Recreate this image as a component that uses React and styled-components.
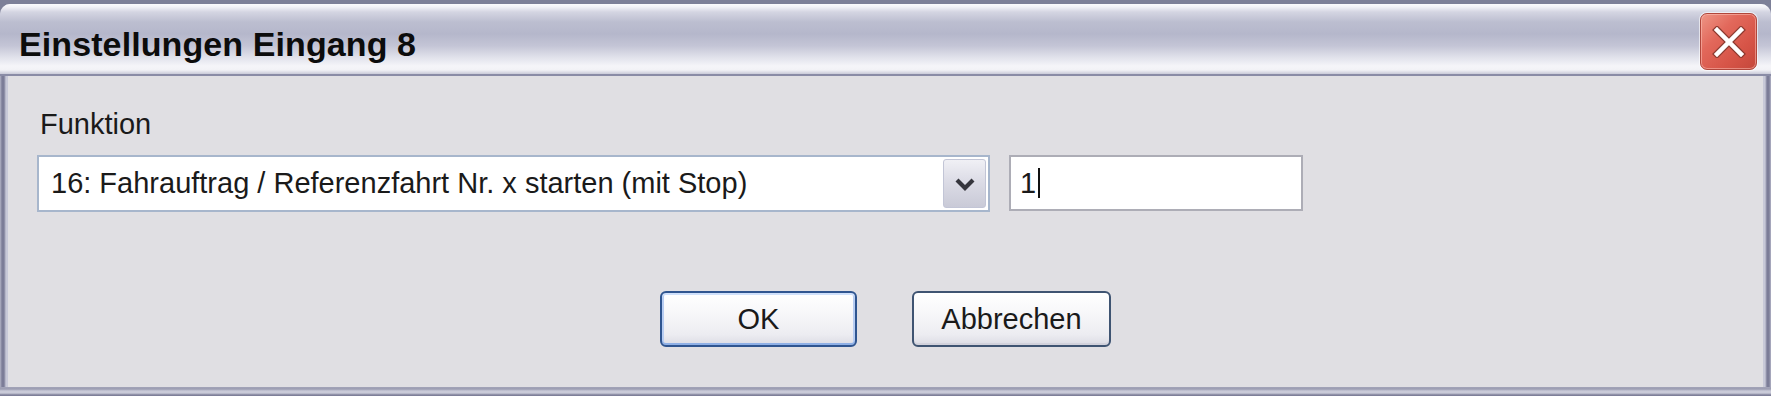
import React from "react";
import styled, { createGlobalStyle } from "styled-components";

const Global = createGlobalStyle`
  html, body { margin: 0; padding: 0; }
  body {
    background: #7d8098;
    font-family: "Liberation Sans", Arial, sans-serif;
    overflow: hidden;
  }
`;

const Window = styled.div`
  width: 1771px;
  height: 396px;
  box-sizing: border-box;
  padding-top: 4px;
  display: flex;
  flex-direction: column;
`;

const Frame = styled.div`
  flex: 1;
  display: flex;
  flex-direction: column;
  border-radius: 10px 10px 0 0;
  overflow: hidden;
  background: linear-gradient(
    to right,
    #b3b4c6 0px,
    #7c7d98 2px,
    #7c7d98 4px,
    #c8c9d8 6px,
    #c8c9d8 calc(100% - 6px),
    #7c7d98 calc(100% - 4px),
    #7c7d98 calc(100% - 2px),
    #b3b4c6 100%
  );
`;

const TitleBar = styled.div`
  height: 72px;
  flex: none;
  display: flex;
  align-items: flex-start;
  justify-content: space-between;
  padding: 0 14px 0 19px;
  box-sizing: border-box;
  border-bottom: 2px solid #8a8ca6;
  background: linear-gradient(
    to bottom,
    #fbfbfd 0px,
    #f2f2f7 3px,
    #d4d5e2 8px,
    #bcbed0 18px,
    #b5b7cb 30px,
    #c4c5d6 42px,
    #e2e3ec 54px,
    #f5f5f9 62px,
    #f2f2f6 66px,
    #c9cad8 70px,
    #b8b9cb 72px
  );
`;

const Title = styled.span`
  margin-top: 23px;
  font-family: "Liberation Sans", Arial, sans-serif;
  font-weight: bold;
  font-size: 34px;
  line-height: 34px;
  color: #0c0c0c;
  letter-spacing: 0.1px;
`;

const CloseButton = styled.div`
  margin-top: 9px;
  width: 57px;
  height: 57px;
  box-sizing: border-box;
  border-radius: 7px;
  border: 1px solid #b0463b;
  background: linear-gradient(135deg, #ee9686 0%, #e2685b 35%, #d65447 70%, #c4473b 100%);
  box-shadow: inset 0 0 0 1px rgba(255, 200, 190, 0.5), 0 0 0 1px rgba(255, 255, 255, 0.6);
  display: flex;
  align-items: center;
  justify-content: center;
`;

const Client = styled.div`
  flex: 1;
  margin: 0 8px;
  background: #e0dfe3;
  display: flex;
  flex-direction: column;
`;

const Form = styled.div`
  padding: 32px 0 0 29px;
  display: flex;
  flex-direction: column;
`;

const Label = styled.div`
  font-size: 29px;
  line-height: 33px;
  color: #1a1a1a;
  margin-left: 3px;
`;

const Row = styled.div`
  margin-top: 14px;
  display: flex;
  align-items: flex-start;
  gap: 19px;
`;

const Combo = styled.div`
  width: 953px;
  height: 57px;
  box-sizing: border-box;
  border: 2px solid #a7b6cc;
  background: #fff;
  display: flex;
  align-items: center;
  padding: 0 2px 0 12px;
`;

const ComboText = styled.span`
  flex: 1;
  font-size: 29px;
  line-height: 33px;
  color: #1a1a1a;
  white-space: nowrap;
`;

const DropButton = styled.div`
  width: 43px;
  height: 49px;
  box-sizing: border-box;
  border: 1px solid #c2c5d6;
  border-radius: 3px;
  background: linear-gradient(to bottom, #f0f0f5 0%, #dcdce6 45%, #c9cad7 100%);
  display: flex;
  align-items: center;
  justify-content: center;
`;

const TextField = styled.div`
  width: 294px;
  height: 56px;
  box-sizing: border-box;
  border: 2px solid #adadb6;
  background: #fff;
  display: flex;
  align-items: center;
  padding-left: 9px;
  font-size: 29px;
  line-height: 33px;
  color: #1a1a1a;
`;

const Caret = styled.span`
  display: inline-block;
  width: 2px;
  height: 30px;
  margin-left: 2px;
  background: #111;
`;

const ButtonRow = styled.div`
  margin-top: 79px;
  display: flex;
  justify-content: center;
  gap: 55px;
`;

const Button = styled.div`
  width: ${(p) => p.$w}px;
  height: 56px;
  box-sizing: border-box;
  border-radius: 6px;
  border: 2px solid ${(p) => (p.$default ? "#2f5590" : "#3f5472")};
  background: linear-gradient(to bottom, #ffffff 0%, #f7f7f9 40%, #ececf1 80%, #dcdce4 100%);
  box-shadow: ${(p) =>
    p.$default
      ? "inset 0 2px 0 #cfe0fb, inset 0 -2px 0 #8fb0e6, inset 2px 0 0 #b8cdf2, inset -2px 0 0 #b8cdf2"
      : "inset 0 -2px 0 #d2d2dc"};
  display: flex;
  align-items: center;
  justify-content: center;
  font-size: 29px;
  line-height: 33px;
  color: #1a1a1a;
`;

const BottomFrame = styled.div`
  height: 9px;
  flex: none;
  background: linear-gradient(
    to bottom,
    #a3a4b8 0px,
    #9c9db2 2px,
    #c9cad8 4px,
    #c9cad8 6px,
    #7e7f99 8px,
    #7e7f99 9px
  );
`;

function CloseIcon() {
  return (
    <svg width="34" height="32" viewBox="0 0 34 32">
      <g strokeLinecap="square">
        <line x1="5" y1="4" x2="29" y2="28" stroke="#8d3a30" strokeWidth="7" />
        <line x1="29" y1="4" x2="5" y2="28" stroke="#8d3a30" strokeWidth="7" />
        <line x1="5" y1="4" x2="29" y2="28" stroke="#ffffff" strokeWidth="4.5" />
        <line x1="29" y1="4" x2="5" y2="28" stroke="#ffffff" strokeWidth="4.5" />
      </g>
    </svg>
  );
}

function Chevron() {
  return (
    <svg width="22" height="14" viewBox="0 0 22 14">
      <polyline
        points="3,3 11,11 19,3"
        fill="none"
        stroke="#35353d"
        strokeWidth="4.2"
        strokeLinejoin="miter"
      />
    </svg>
  );
}

export default function App() {
  return (
    <>
      <Global />
      <Window>
        <Frame>
          <TitleBar>
            <Title>Einstellungen Eingang 8</Title>
            <CloseButton>
              <CloseIcon />
            </CloseButton>
          </TitleBar>
          <Client>
            <Form>
              <Label>Funktion</Label>
              <Row>
                <Combo>
                  <ComboText>16: Fahrauftrag / Referenzfahrt Nr. x starten (mit Stop)</ComboText>
                  <DropButton>
                    <Chevron />
                  </DropButton>
                </Combo>
                <TextField>
                  1<Caret />
                </TextField>
              </Row>
            </Form>
            <ButtonRow>
              <Button $w={197} $default>
                OK
              </Button>
              <Button $w={199}>Abbrechen</Button>
            </ButtonRow>
          </Client>
          <BottomFrame />
        </Frame>
      </Window>
    </>
  );
}
